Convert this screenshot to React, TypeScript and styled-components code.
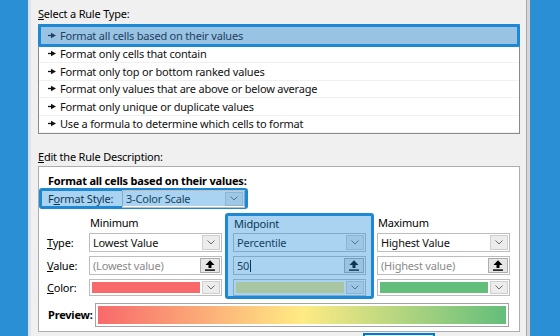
import styled, { createGlobalStyle } from "styled-components";

const Global = createGlobalStyle`
  html, body { margin: 0; padding: 0; }
  body {
    font-family: "Noto Sans", "Segoe UI", sans-serif;
    font-size: 11px;
    letter-spacing: -0.2px;
    color: #000;
    background: #2b8fd6;
  }
`;

const Screen = styled.div`
  display: flex;
  width: 560px;
  height: 336px;
  overflow: hidden;
`;

const Side = styled.div<{ $w: number }>`
  width: ${(p) => p.$w}px;
  flex-shrink: 0;
  background: #2b8fd6;
`;

const Dialog = styled.div`
  flex: 1;
  min-width: 0;
  display: flex;
  flex-direction: column;
  background: #f0f0f0;
  border-left: 3px solid #dde2e8;
  border-right: 3px solid #d6d6d6;
  box-shadow: inset -1px 0 0 #a9a9a9;
  padding: 7px 7px 0;
`;

const Label = styled.div`
  height: 14px;
  line-height: 14px;
  white-space: nowrap;
`;

const SectionLabel = styled(Label)`
  margin-bottom: 3px;
`;

const RuleList = styled.div`
  border: 1px solid #8a8a8a;
  background: #fff;
  padding-top: 3px;
  height: 110px;
  box-sizing: border-box;
  display: flex;
  flex-direction: column;
`;

const RuleRow = styled.div<{ $selected?: boolean }>`
  display: flex;
  align-items: center;
  gap: 4px;
  height: 17.6px;
  padding-left: 9px;
  box-sizing: border-box;
  border-bottom: 1px solid #f0f0f0;
  white-space: nowrap;
  color: #111;
  ${(p) =>
    p.$selected &&
    `
    height: 23px;
    margin: -4px -1px -1.4px;
    padding-left: 7px;
    border: 3px solid #1d89d4;
    border-radius: 2px;
    background: #98c3e3;
    color: #23405f;
  `}
`;

const Arrow = () => (
  <svg width="8" height="7" viewBox="0 0 8 7">
    <path d="M0 3.5H4" stroke="currentColor" strokeWidth="1.3" />
    <path d="M3 0.8L8 3.5L3 6.2Z" fill="currentColor" />
  </svg>
);

const EditLabel = styled(Label)`
  margin-top: 16px;
  margin-bottom: 2px;
`;

const RuleBox = styled.div`
  background: #fff;
  border: 1px solid #adadad;
  padding: 7px 9px 4px;
  display: flex;
  flex-direction: column;
`;

const Bold = styled.div`
  font-weight: 700;
  height: 14px;
  line-height: 14px;
  white-space: nowrap;
`;

const Highlight = styled.div`
  position: relative;
  border: 3px solid #1d89d4;
  border-radius: 3px;
  &::after {
    content: "";
    position: absolute;
    inset: 0;
    background: rgba(30, 140, 215, 0.38);
    pointer-events: none;
  }
`;

const StyleRow = styled(Highlight)`
  display: flex;
  align-items: center;
  width: 209px;
  height: 21px;
  box-sizing: border-box;
  margin-left: -9px;
  padding-left: 6px;
`;

const StyleLabel = styled.div`
  width: 74px;
  flex-shrink: 0;
  white-space: nowrap;
`;

const Grid = styled.div`
  display: grid;
  grid-template-columns: 30px 133px 133px 133px;
  column-gap: 11px;
  margin-top: 5px;
`;

const Col = styled.div`
  display: flex;
  flex-direction: column;
  gap: 4px;
`;

const MidCol = styled(Highlight)`
  display: flex;
  flex-direction: column;
  gap: 4px;
  margin: -1px -8px -3px;
  padding: 0 5px;
`;

const Header = styled.div<{ $h?: number }>`
  height: ${(p) => p.$h ?? 18}px;
  line-height: ${(p) => p.$h ?? 18}px;
  margin-bottom: -3px;
  padding-left: 1px;
  white-space: nowrap;
`;

const RowLabel = styled.div<{ $h: number }>`
  height: ${(p) => p.$h}px;
  display: flex;
  align-items: center;
  margin-left: -1px;
  white-space: nowrap;
`;

const Field = styled.div<{ $h?: number }>`
  display: flex;
  align-items: stretch;
  height: ${(p) => p.$h ?? 19}px;
  box-sizing: border-box;
  border: 1px solid #bdbdbd;
  background: #fff;
`;

const FieldText = styled.div<{ $muted?: boolean }>`
  flex: 1;
  display: flex;
  align-items: center;
  padding-left: 3px;
  white-space: nowrap;
  overflow: hidden;
  color: ${(p) => (p.$muted ? "#8a8a8a" : "#111")};
`;

const Caret = styled.span`
  display: inline-block;
  width: 1px;
  height: 12px;
  background: #000;
  margin-left: 1px;
`;

const DropButton = styled.div`
  width: 16px;
  margin: 1px;
  border: 1px solid #cfcfcf;
  background: #ececec;
  display: flex;
  align-items: center;
  justify-content: center;
  color: #6a6a6a;
`;

const PickButton = styled(DropButton)`
  width: 18px;
  border-color: #adadad;
  background: #e6e6e6;
  color: #000;
`;

const Swatch = styled.div<{ $c: string }>`
  flex: 1;
  margin: 2px 1px 2px 2px;
  background: ${(p) => p.$c};
`;

const Chevron = () => (
  <svg width="8" height="5" viewBox="0 0 8 5">
    <path d="M0.5 0.5L4 4L7.5 0.5" fill="none" stroke="currentColor" strokeWidth="1" />
  </svg>
);

const Upload = () => (
  <svg width="10" height="11" viewBox="0 0 10 11">
    <path d="M5 0.3L9.5 5H6.5V8H3.5V5H0.5Z" fill="currentColor" />
    <rect x="0" y="9.4" width="10" height="1.4" fill="currentColor" />
  </svg>
);

const PreviewRow = styled.div`
  display: flex;
  align-items: center;
  margin-top: 7px;
`;

const PreviewLabel = styled(Bold)`
  width: 47px;
  flex-shrink: 0;
`;

const PreviewBar = styled.div`
  flex: 1;
  margin-right: 1px;
  height: 24px;
  box-sizing: border-box;
  border: 1px solid #a3a3a3;
  padding: 2px;
  background: #fff;
  &::before {
    content: "";
    display: block;
    height: 100%;
    background: linear-gradient(to right, #f8696b 0%, #ffeb84 50%, #63be7b 100%);
  }
`;

const Buttons = styled.div`
  display: flex;
  padding-left: 325px;
  margin-top: 1px;
`;

const OkButton = styled.div`
  width: 72px;
  height: 22px;
  box-sizing: border-box;
  border: 1px solid #0078d7;
  box-shadow: inset 0 0 0 1px #0078d7;
  background: #e5f1fb;
`;

const rules = [
  "Format all cells based on their values",
  "Format only cells that contain",
  "Format only top or bottom ranked values",
  "Format only values that are above or below average",
  "Format only unique or duplicate values",
  "Use a formula to determine which cells to format",
];

type ColProps = {
  title: string;
  type: string;
  value: React.ReactNode;
  muted?: boolean;
  color: string;
  h?: number;
};

const ColumnBody = ({ title, type, value, muted, color, h }: ColProps) => (
  <>
    <Header $h={h}>{title}</Header>
    <Field>
      <FieldText>{type}</FieldText>
      <DropButton>
        <Chevron />
      </DropButton>
    </Field>
    <Field>
      <FieldText $muted={muted}>{value}</FieldText>
      <PickButton>
        <Upload />
      </PickButton>
    </Field>
    <Field $h={17}>
      <Swatch $c={color} />
      <DropButton>
        <Chevron />
      </DropButton>
    </Field>
  </>
);

export default function App() {
  return (
    <Screen>
      <Global />
      <Side $w={28} />
      <Dialog>
        <SectionLabel>
          <u>S</u>elect a Rule Type:
        </SectionLabel>
        <RuleList>
          {rules.map((r, i) => (
            <RuleRow key={r} $selected={i === 0}>
              <Arrow />
              {r}
            </RuleRow>
          ))}
        </RuleList>

        <EditLabel>
          <u>E</u>dit the Rule Description:
        </EditLabel>
        <RuleBox>
          <Bold>Format all cells based on their values:</Bold>
          <StyleRow>
            <StyleLabel>
              F<u>o</u>rmat Style:
            </StyleLabel>
            <Field $h={18} style={{ width: 123 }}>
              <FieldText>3-Color Scale</FieldText>
              <DropButton>
                <Chevron />
              </DropButton>
            </Field>
          </StyleRow>

          <Grid>
            <Col>
              <Header />
              <RowLabel $h={19}>
                <span>
                  <u>T</u>ype:
                </span>
              </RowLabel>
              <RowLabel $h={19}>
                <span>
                  <u>V</u>alue:
                </span>
              </RowLabel>
              <RowLabel $h={17}>
                <span>
                  <u>C</u>olor:
                </span>
              </RowLabel>
            </Col>
            <Col>
              <ColumnBody title="Minimum" type="Lowest Value" value="(Lowest value)" muted color="#f8696b" />
            </Col>
            <MidCol>
              <ColumnBody
                h={16}
                title="Midpoint"
                type="Percentile"
                value={
                  <>
                    50
                    <Caret />
                  </>
                }
                color="#ffeb84"
              />
            </MidCol>
            <Col>
              <ColumnBody title="Maximum" type="Highest Value" value="(Highest value)" muted color="#63be7b" />
            </Col>
          </Grid>

          <PreviewRow>
            <PreviewLabel>Preview:</PreviewLabel>
            <PreviewBar />
          </PreviewRow>
        </RuleBox>
        <Buttons>
          <OkButton />
        </Buttons>
      </Dialog>
      <Side $w={30} />
    </Screen>
  );
}
